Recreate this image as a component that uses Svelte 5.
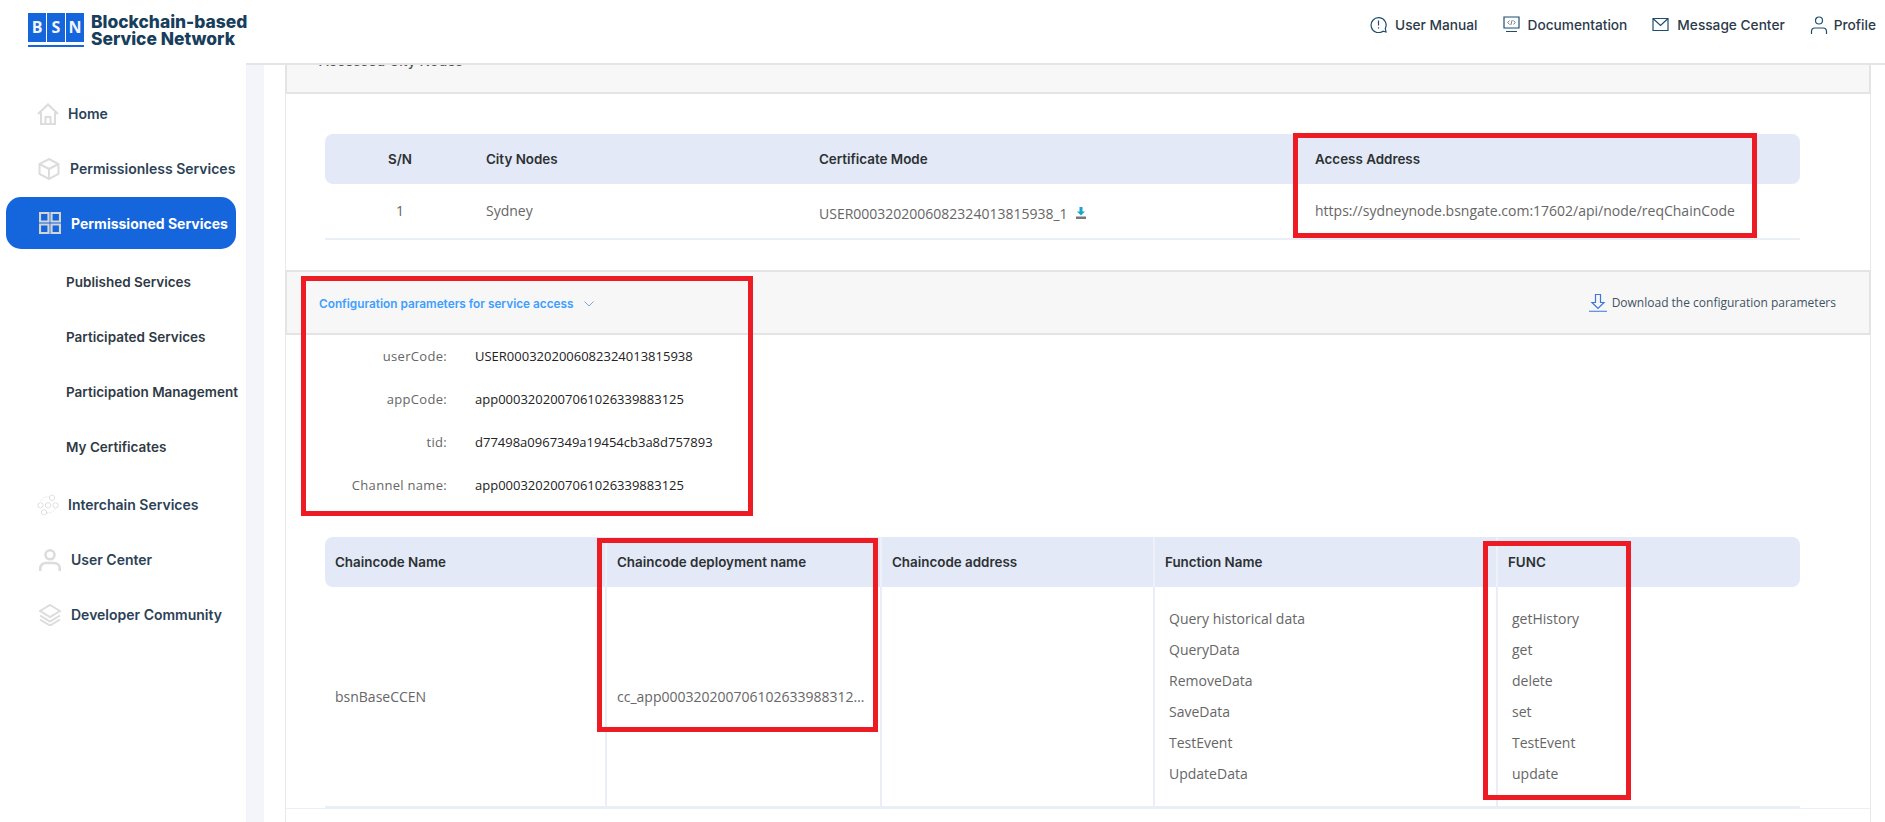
<script>
  const cols1 = ['S/N', 'City Nodes', 'Certificate Mode', 'Access Address'];
  const cols2 = ['Chaincode Name', 'Chaincode deployment name', 'Chaincode address', 'Function Name', 'FUNC'];
  const params = [
    ['userCode:', 'USER0003202006082324013815938'],
    ['appCode:', 'app0003202007061026339883125'],
    ['tid:', 'd77498a0967349a19454cb3a8d757893'],
    ['Channel name:', 'app0003202007061026339883125']
  ];
  const funcNames = ['Query historical data', 'QueryData', 'RemoveData', 'SaveData', 'TestEvent', 'UpdateData'];
  const funcs = ['getHistory', 'get', 'delete', 'set', 'TestEvent', 'update'];
  const subs = ['Published Services', 'Participated Services', 'Participation Management', 'My Certificates'];
</script>

<div class="app">
  <aside class="side">
    <div class="logo">
      <div class="mark">
        <div class="tiles"><span>B</span><span>S</span><span>N</span></div>
        <div class="mark-line"></div>
      </div>
      <div class="logo-text">Blockchain-based<br />Service Network</div>
    </div>
    <nav class="nav">
      <a class="item home">
        <svg viewBox="0 0 22 22" class="ico"><path d="M1 11 11 1.500 21 11M4 9v12h14V9M8.500 21v-7h5v7" /></svg>
        <span>Home</span>
      </a>
      <a class="item pless">
        <svg viewBox="0 0 22 22" class="ico"><path d="M11 1 20.500 6v10L11 21 1.500 16V6ZM1.500 6 11 11 20.500 6M11 11v10" /></svg>
        <span>Permissionless Services</span>
      </a>
      <a class="item active">
        <svg viewBox="0 0 22 22" class="ico"><path d="M1 1h8.500v8.500H1zM12.500 1H21v8.500h-8.500zM1 12.500h8.500V21H1zM12.500 12.500H21V21h-8.500z" /></svg>
        <span>Permissioned Services</span>
      </a>
      <div class="subs">
        {#each subs as s}<a class="sub">{s}</a>{/each}
      </div>
      <a class="item inter">
        <svg viewBox="0 0 22 22" class="ico thin">
          <path d="M3.500 8.500l2.500 1.400v2.800l-2.500 1.400L1 12.700V9.900zM11 8.500l2.500 1.400v2.800L11 14.100l-2.500-1.400V9.900zM18.500 8.500 21 9.900v2.800l-2.500 1.400-2.500-1.400V9.900zM15 1l2.500 1.400v2.800L15 6.600l-2.500-1.400V2.400zM7 15.500l2.500 1.400v2.800L7 21.100l-2.500-1.400v-2.800z" />
          <path class="dots" d="M4 7C6 3.500 9 2.500 12 3M10 19c4 0 7-1.500 8.500-4.500" />
        </svg>
        <span>Interchain Services</span>
      </a>
      <a class="item user">
        <svg viewBox="0 0 22 22" class="ico thick"><circle cx="11" cy="5.800" r="4.500" /><path d="M1.300 22v-2.500c0-3.300 2.500-5.500 5.500-5.500h8.400c3 0 5.500 2.200 5.500 5.500V22" /></svg>
        <span>User Center</span>
      </a>
      <a class="item dev">
        <svg viewBox="0 0 22 22" class="ico"><path d="M11 1 21 7 11 13 1 7ZM1 11.500 11 17.500 21 11.500M1 15.500 11 21.500 21 15.500" /></svg>
        <span>Developer Community</span>
      </a>
    </nav>
  </aside>

  <div class="right">
    <header class="top">
      <a class="tl">
        <svg viewBox="0 0 17 17" class="tico"><path d="M13 15.200A7.500 7.500 0 1 1 15.300 12.500L16 16Z" /><path d="M8.500 4.500v5M8.500 11.200v1.300" /></svg>
        User Manual
      </a>
      <a class="tl">
        <svg viewBox="0 0 17 17" class="tico"><path d="M1 1h15v11H1zM3 15.500h11" /><path class="fine" d="M6.500 4.500 4.800 6.500l1.700 2M10.500 4.500l1.700 2-1.700 2M9.200 4 7.800 9" /></svg>
        Documentation
      </a>
      <a class="tl">
        <svg viewBox="0 0 17 17" class="tico"><path d="M1 2.500h15v12H1zM1.500 3 8.500 9.500 15.500 3" /></svg>
        Message Center
      </a>
      <a class="tl profile">
        <svg viewBox="0 0 18 18" class="tico wide"><circle cx="9" cy="4.500" r="3.500" /><path d="M1.500 18v-2.500c0-2 1.500-3.500 3.500-3.500h8c2 0 3.500 1.500 3.500 3.500V18" /></svg>
        Profile
      </a>
    </header>

    <div class="body">
      <div class="strip"></div>
      <main class="main">
        <div class="card">
          <div class="panel title-panel"><div class="clip">Accessed City Nodes</div></div>

          <div class="table t1">
            <div class="thead">
              {#each cols1 as c, i}<div class="th" class:center={i === 0}>{c}</div>{/each}
            </div>
            <div class="trow">
              <div class="td center">1</div>
              <div class="td">Sydney</div>
              <div class="td cert">
                USER0003202006082324013815938_1
                <svg viewBox="0 0 12 12" class="dl"><path class="arrow" d="M4.500 0h3v4.500H10L6 8.500 2 4.500h2.500z" /><path class="tray" d="M1 9.500h10V12H1z" /></svg>
              </div>
              <div class="td addr">https://sydneynode.bsngate.com:17602/api/node/reqChainCode</div>
            </div>
          </div>

          <div class="panel cfg">
            <div class="cfg-title">
              Configuration parameters for service access
              <svg viewBox="0 0 10 6" class="chev"><path d="M.5.500 5 5 9.500.500" /></svg>
            </div>
            <a class="cfg-dl">
              <svg viewBox="0 0 18 18" class="dl2"><path d="M6.500.500h5v8h3.500L9 14.500 3 8.500h3.500zM0 17.250h18" /></svg>
              Download the configuration parameters
            </a>
          </div>

          <div class="params">
            {#each params as [k, v]}
              <div class="param"><span class="k">{k}</span><span class="v">{v}</span></div>
            {/each}
          </div>

          <div class="wrap2">
            <div class="table t2">
              <div class="thead">
                {#each cols2 as c}<div class="th">{c}</div>{/each}
              </div>
              <div class="trow">
                <div class="td mid">bsnBaseCCEN</div>
                <div class="td mid"><span class="ell">cc_app0003202007061026339883125_01</span></div>
                <div class="td mid"></div>
                <div class="td list">{#each funcNames as f}<div>{f}</div>{/each}</div>
                <div class="td list">{#each funcs as f}<div>{f}</div>{/each}</div>
              </div>
            </div>
          </div>
        </div>
      </main>
    </div>
  </div>

  <div class="mark-box a"></div>
  <div class="mark-box b"></div>
  <div class="mark-box c"></div>
  <div class="mark-box d"></div>
</div>

<style>
  :global(body) { margin: 0; background: #fff; }
  .app {
    position: relative;
    width: 1885px;
    height: 822px;
    overflow: hidden;
    display: flex;
    background: #fff;
    font-family: "Open Sans", sans-serif;
    color: #666;
  }
  a { color: inherit; text-decoration: none; }

  .mark-box { position: absolute; box-sizing: border-box; border: 5px solid #ed1c24; }
  .mark-box.a { left: 1293px; top: 133px; width: 464px; height: 105px; }
  .mark-box.b { left: 301px; top: 276px; width: 452px; height: 240px; }
  .mark-box.c { left: 597px; top: 538px; width: 281px; height: 194px; }
  .mark-box.d { left: 1483px; top: 541px; width: 148px; height: 259px; }

  .side { width: 246px; flex: none; background: #fff; }
  .logo { display: flex; gap: 7px; padding: 13px 0 0 28px; height: 51px; }
  .mark { width: 56px; flex: none; }
  .tiles { display: flex; gap: 1px; background: #fff; }
  .tiles span {
    flex: 1;
    height: 29px;
    background: #1565dd;
    color: #f2f6fd;
    font: 700 16px/29px "Open Sans", sans-serif;
    text-align: center;
  }
  .mark-line { height: 2px; margin-top: 3px; background: #1565dd; }
  .logo-text {
    font: 800 17.400px/17px Inter, sans-serif;
    color: #183e5c;
    white-space: nowrap;
    height: 34px;
  }

  .nav { display: flex; flex-direction: column; padding-top: 22px; }
  .item {
    display: flex;
    align-items: center;
    height: 55px;
    color: #2c4256;
    font: 600 14px Inter, sans-serif;
    white-space: nowrap;
  }
  .ico { width: 22px; height: 22px; flex: none; fill: none; stroke: #dcdcdc; stroke-width: 2; }
  .ico.thin { stroke-width: .900; }
  .ico.thick { stroke-width: 2.600; }
  .dots { stroke-dasharray: 1 1; }
  .home { padding-left: 37px; gap: 9px; }
  .pless { padding-left: 38px; gap: 10px; }
  .active {
    height: 52px;
    margin: 1px 10px 2px 6px;
    padding-left: 33px;
    gap: 10px;
    border-radius: 15px;
    background: #1565dd;
    color: #fff;
    font-weight: 700;
  }
  .active .ico { stroke: #d4d4d4; stroke-width: 2.200; }
  .subs { display: flex; flex-direction: column; margin: 4px 0 2px; }
  .sub {
    height: 55px;
    padding-left: 66px;
    font: 600 13.500px/55px Inter, sans-serif;
    color: #2f3a45;
    white-space: nowrap;
  }
  .inter { padding-left: 37px; gap: 9px; }
  .user { padding-left: 39px; gap: 10px; }
  .dev { padding-left: 39px; gap: 10px; }

  .right { flex: 1; min-width: 0; display: flex; flex-direction: column; }
  .top {
    height: 49px;
    padding: 0 9px 14px 0;
    display: flex;
    justify-content: flex-end;
    align-items: center;
    gap: 25px;
    border-bottom: 2px solid #e5e5e5;
    color: #2b3a4a;
    font: 500 13.700px Inter, sans-serif;
  }
  .tl { display: flex; align-items: center; gap: 8px; white-space: nowrap; }
  .profile { gap: 6px; }
  .tico { width: 17px; height: 17px; fill: none; stroke: #1f4d6e; stroke-width: 1.200; }
  .tico.wide { width: 18px; height: 18px; }
  .fine { stroke-width: .700; }

  .body { flex: 1; min-height: 0; display: flex; }
  .strip { width: 18px; flex: none; background: #f4f5fa; }
  .main { flex: 1; padding: 0 14px 0 21px; min-width: 0; }
  .card {
    height: 100%;
    border: solid #e8e8e8;
    border-width: 0 1px;
  }
  .panel {
    margin: 0 -1px;
    background: #f7f7f7;
    border: 2px solid #e4e4e4;
  }
  .title-panel { height: 27px; border-top: 0; overflow: hidden; }
  .clip {
    margin: -14px 0 0 32px;
    font: 500 14px/20px Inter, sans-serif;
    color: #555;
  }

  .table { margin: 0 70px 0 39px; }
  .t1 { margin-top: 40px; }
  .thead {
    display: grid;
    height: 50px;
    background: #e3e9f6;
    border-radius: 8px;
    align-items: center;
  }
  .th { font: 600 13.400px Inter, sans-serif; color: #2d3133; white-space: nowrap; }
  .trow { display: grid; border-bottom: 2px solid #eaeef5; }
  .td { font-size: 14px; color: #666; white-space: nowrap; }
  .center { text-align: center; }

  .t1 .thead, .t1 .trow { grid-template-columns: 150px 333px 496px 1fr; }
  .t1 .th:not(.center), .t1 .td:not(.center) { padding-left: 11px; }
  .t1 .trow { height: 54px; align-items: center; }
  .t1 .td { margin-top: -1px; }
  .t1 .td.cert { display: flex; align-items: center; gap: 7px; margin-top: 4px; }
  .dl { width: 12px; height: 12px; flex: none; }
  .arrow { fill: #19a7c9; }
  .tray { fill: #777; }

  .cfg {
    margin-top: 30px;
    height: 61px;
    display: flex;
    align-items: center;
    justify-content: space-between;
    padding: 0 33px 0 32px;
  }
  .cfg-title {
    display: flex;
    align-items: center;
    gap: 10px;
    margin-top: 2px;
    font: 600 11.800px Inter, sans-serif;
    color: #409eff;
    white-space: nowrap;
  }
  .chev { width: 10px; height: 6px; fill: none; stroke: #7aa7d8; stroke-width: 1; }
  .cfg-dl {
    display: flex;
    align-items: center;
    gap: 5px;
    font-size: 12px;
    color: #3f5262;
    white-space: nowrap;
  }
  .dl2 { width: 18px; height: 18px; fill: none; stroke: #3a78dc; stroke-width: 1.200; }

  .params { margin-top: -1px; }
  .param { display: flex; height: 43px; align-items: center; font-size: 13px; }
  .k { width: 161px; text-align: right; color: #666; letter-spacing: .3px; }
  .v { margin-left: 28px; color: #222; }

  .wrap2 { border-bottom: 1px solid #ebeef6; margin-top: 31px; }
  .t2 .thead, .t2 .trow { grid-template-columns: 280px 275px 273px 343px 1fr; }
  .t2 .th { padding-left: 10px; align-self: stretch; display: flex; align-items: center; }
  .t2 .th + .th { border-left: 2px solid #eef1f8; }
  .t2 .trow { height: 219px; }
  .t2 .td { padding-left: 10px; min-width: 0; }
  .t2 .td + .td { border-left: 2px solid #ebeef6; }
  .mid { display: flex; align-items: center; height: 219px; }
  .ell { display: block; overflow: hidden; text-overflow: ellipsis; white-space: nowrap; width: 248px; }
  .t2 .td.list { padding: 16px 0 0 14px; line-height: 31px; }
</style>
